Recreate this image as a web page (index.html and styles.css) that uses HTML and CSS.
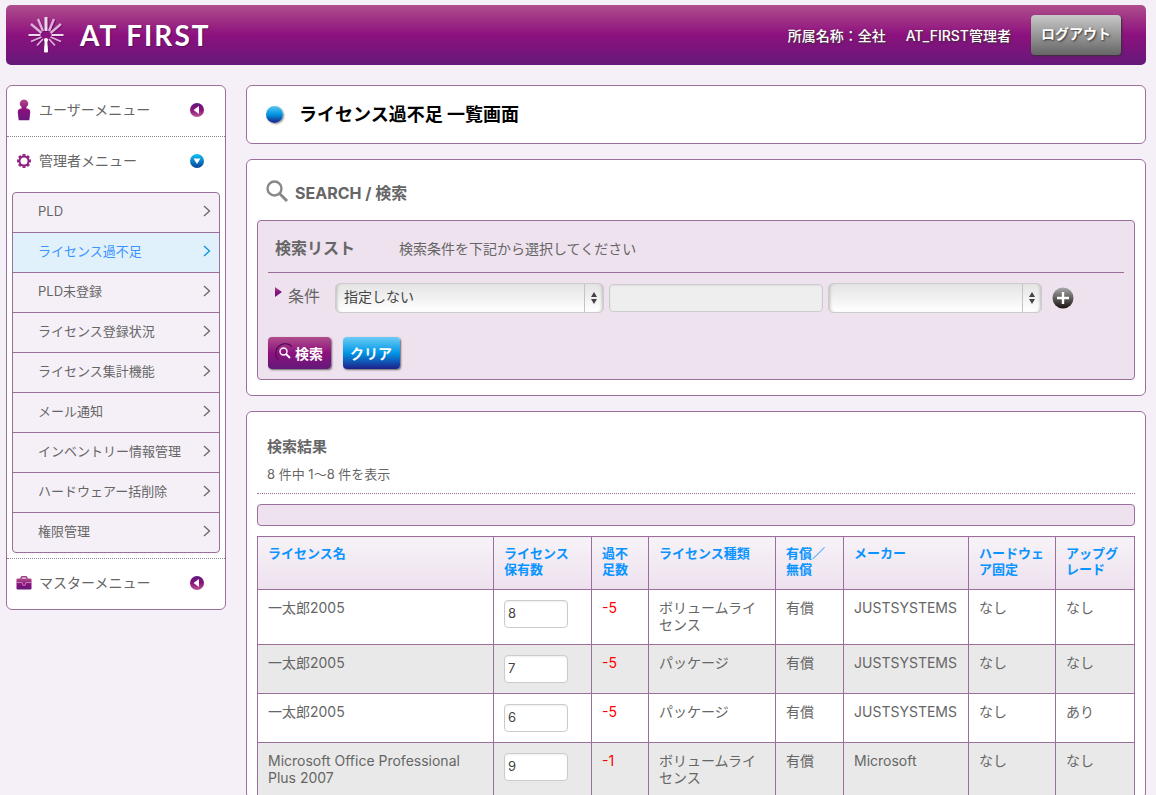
FILE: index.html
```
<!DOCTYPE html>
<html lang="ja">
  <head>
    <meta charset="utf-8">
    <title>ライセンス過不足 一覧画面 | AT FIRST</title>
    <link rel="stylesheet" href="styles.css">
  </head>
  <body>
    <!-- shared gradients and symbols -->
    <svg class="defs" width="0" height="0" aria-hidden="true">
      <defs>
        <linearGradient id="purple" x1="0" y1="0" x2="0" y2="1">
          <stop offset="0" stop-color="#b04e8c"/>
          <stop offset="0.5" stop-color="#8c117e"/>
          <stop offset="1" stop-color="#65197a"/>
        </linearGradient>
        <linearGradient id="purple-up" x1="0" y1="0" x2="0" y2="1">
          <stop offset="0" stop-color="#5c1a7c"/>
          <stop offset="0.5" stop-color="#8c117e"/>
          <stop offset="1" stop-color="#b55a92"/>
        </linearGradient>
        <linearGradient id="sky" x1="0" y1="0" x2="0" y2="1">
          <stop offset="0" stop-color="#10c4f6"/>
          <stop offset="1" stop-color="#063f96"/>
        </linearGradient>
        <linearGradient id="dark" x1="0" y1="0" x2="0" y2="1">
          <stop offset="0" stop-color="#a9aaa8"/>
          <stop offset="1" stop-color="#1a1210"/>
        </linearGradient>
        <symbol id="closed" viewBox="0 0 14 14">
          <circle cx="7" cy="7" r="7" fill="url(#purple-up)"/>
          <path d="M9 3v8L3.500 7z" fill="#fff"/>
        </symbol>
        <symbol id="chevron" viewBox="0 0 8 12">
          <path d="M1 1l5.500 5L1 11" fill="none" stroke="currentColor" stroke-width="1.300"/>
        </symbol>
        <symbol id="updown" viewBox="0 0 6 12">
          <path d="M3 0l3 5H0zM3 12L0 7h6z" fill="#444"/>
        </symbol>
      </defs>
    </svg>

    <header class="header">
      <a class="logo" href="#">
        <svg width="36" height="38" viewBox="0 0 36 38" stroke="#dfb0d6" stroke-width="2.400" aria-hidden="true">
          <path d="M18 1v14" stroke="#f0d8ec" stroke-width="3"/>
          <path d="M10 3l5 12M26 3l-5 12"/>
          <path d="M3 8l10.500 9M33 8l-10.500 9"/>
          <path d="M0.500 19h12M23.500 19h12" stroke="#f0d8ec" stroke-width="2"/>
          <path d="M3 25.500l10.500-4.500M33 25.500l-10.500-4.500" stroke-width="1.800"/>
          <path d="M9 29.500l6-6.500M27 29.500l-6-6.500" stroke-width="1.800"/>
          <path d="M16.500 36l.7-11h1.600l.7 11z" fill="#fff" stroke="#fff" stroke-width="1"/>
          <circle cx="18" cy="24" r="2" fill="#fff" stroke="none"/>
        </svg>
        <span class="logo-text">AT FIRST</span>
      </a>
      <div class="account">
        <span>所属名称：全社</span>
        <span>AT_FIRST管理者</span>
        <button type="button" class="logout">ログアウト</button>
      </div>
    </header>

    <div class="container">
      <nav class="sidebar">
        <a class="menu-head" href="#">
          <svg class="menu-icon" width="16" height="22" viewBox="0 0 16 22" fill="url(#purple)" aria-hidden="true">
            <path d="M8 0.500a4 4 0 0 1 2.600 7.200L10.300 9.500C13 9.700 14.300 10.500 14.300 13L13.300 21.200H2.700L1.700 13c0-2.500 1.300-3.300 4-3.500L5.400 7.700A4 4 0 0 1 8 0.500z"/>
          </svg>
          <span>ユーザーメニュー</span>
          <svg class="toggle" width="14" height="14" aria-hidden="true"><use href="#closed"/></svg>
        </a>
        <div class="menu-group">
          <a class="menu-head" href="#">
            <svg class="menu-icon" width="16" height="16" viewBox="0 0 16 16" aria-hidden="true">
              <g fill="#9a2a84">
                <path d="M6.500 1h3v14h-3zM1 6.500h14v3H1z"/>
                <path d="M6.500 1h3v14h-3zM1 6.500h14v3H1z" transform="rotate(45 8 8)"/>
              </g>
              <circle cx="8" cy="8" r="4.500" fill="#fff" stroke="#922082" stroke-width="2"/>
            </svg>
            <span>管理者メニュー</span>
            <svg class="toggle" width="14" height="14" viewBox="0 0 14 14" aria-hidden="true">
              <circle cx="7" cy="7" r="7" fill="url(#sky)"/>
              <path d="M3.500 4.500h7L7 10z" fill="#fff"/>
            </svg>
          </a>
          <ul class="submenu">
            <li><a href="#">PLD<svg width="8" height="12"><use href="#chevron"/></svg></a></li>
            <li class="active"><a href="#">ライセンス過不足<svg width="8" height="12"><use href="#chevron"/></svg></a></li>
            <li><a href="#">PLD未登録<svg width="8" height="12"><use href="#chevron"/></svg></a></li>
            <li><a href="#">ライセンス登録状況<svg width="8" height="12"><use href="#chevron"/></svg></a></li>
            <li><a href="#">ライセンス集計機能<svg width="8" height="12"><use href="#chevron"/></svg></a></li>
            <li><a href="#">メール通知<svg width="8" height="12"><use href="#chevron"/></svg></a></li>
            <li><a href="#">インベントリー情報管理<svg width="8" height="12"><use href="#chevron"/></svg></a></li>
            <li><a href="#">ハードウェアー括削除<svg width="8" height="12"><use href="#chevron"/></svg></a></li>
            <li><a href="#">権限管理<svg width="8" height="12"><use href="#chevron"/></svg></a></li>
          </ul>
        </div>
        <a class="menu-head" href="#">
          <svg class="menu-icon" width="16" height="14" viewBox="0 0 16 14" aria-hidden="true">
            <path d="M4.500 3l1.500-2.200h4L11.500 3" fill="none" stroke="#a23c88" stroke-width="1.400"/>
            <rect x="0.500" y="2.500" width="15" height="11" rx="1" fill="url(#purple)"/>
            <path d="M1 6.500h5M10 6.500h5M6.500 6.500v1.500a1.500 1.500 0 0 0 3 0V6.500" fill="none" stroke="#c98abd" stroke-width="0.900"/>
          </svg>
          <span>マスターメニュー</span>
          <svg class="toggle" width="14" height="14" aria-hidden="true"><use href="#closed"/></svg>
        </a>
      </nav>

      <main class="main">
        <section class="card title-card">
          <span class="ball"></span>
          <h1>ライセンス過不足 一覧画面</h1>
        </section>

        <section class="card search-card">
          <h2 class="search-title">
            <svg width="23" height="23" viewBox="0 0 23 23" fill="none" stroke="#888" aria-hidden="true">
              <circle cx="8.500" cy="8.500" r="7" stroke-width="2.400"/>
              <path d="M13.500 13.500l7.500 7.500" stroke-width="3"/>
            </svg>
            <span>SEARCH / 検索</span>
          </h2>
          <form class="search-panel">
            <div class="panel-head">
              <h3>検索リスト</h3>
              <p>検索条件を下記から選択してください</p>
            </div>
            <div class="condition">
              <svg class="marker" width="7" height="10" viewBox="0 0 7 10" aria-hidden="true">
                <path d="M0 0l7 5-7 5z" fill="url(#purple)"/>
              </svg>
              <label for="field">条件</label>
              <div class="select field-select">
                <select id="field">
                  <option>指定しない</option>
                </select>
                <svg width="6" height="12" aria-hidden="true"><use href="#updown"/></svg>
              </div>
              <input class="keyword" type="text" aria-label="キーワード">
              <div class="select operator-select">
                <select aria-label="一致条件">
                  <option></option>
                </select>
                <svg width="6" height="12" aria-hidden="true"><use href="#updown"/></svg>
              </div>
              <button type="button" class="add" aria-label="条件を追加">
                <svg width="22" height="22" viewBox="0 0 22 22">
                  <circle cx="11" cy="11" r="10.500" fill="url(#dark)"/>
                  <path d="M11 5v12M5 11h12" stroke="#fff" stroke-width="2.400"/>
                </svg>
              </button>
            </div>
            <div class="buttons">
              <button type="submit" class="btn btn-search">
                <svg width="20" height="20" viewBox="0 0 20 20" fill="none" aria-hidden="true">
                  <path d="M3.500 17A9.300 9.300 0 0 1 17 3.500" stroke="#560c56" stroke-width="1.200"/>
                  <circle cx="8.500" cy="8.500" r="3.500" stroke="#fff" stroke-width="1.400"/>
                  <path d="M11 11l4 4" stroke="#fff" stroke-width="1.800"/>
                </svg>
                検索
              </button>
              <button type="reset" class="btn btn-clear">クリア</button>
            </div>
          </form>
        </section>

        <section class="card result-card">
          <div class="result-head">
            <h2>検索結果</h2>
            <p>8 件中 1〜8 件を表示</p>
          </div>
          <div class="toolbar"></div>
          <table class="result">
            <colgroup>
              <col>
              <col class="col-count">
              <col class="col-diff">
              <col class="col-type">
              <col class="col-paid">
              <col class="col-maker">
              <col class="col-hard">
              <col class="col-upgrade">
            </colgroup>
            <thead>
              <tr>
                <th><a href="#">ライセンス名</a></th>
                <th><a href="#">ライセンス<br>保有数</a></th>
                <th><a href="#">過不<br>足数</a></th>
                <th><a href="#">ライセンス種類</a></th>
                <th><a href="#">有償／<br>無償</a></th>
                <th><a href="#">メーカー</a></th>
                <th><a href="#">ハードウェ<br>ア固定</a></th>
                <th><a href="#">アップグ<br>レード</a></th>
              </tr>
            </thead>
            <tbody>
              <tr>
                <td>一太郎2005</td>
                <td class="count"><input type="text" value="8" aria-label="ライセンス保有数"></td>
                <td class="minus">-5</td>
                <td>ボリュームライセンス</td>
                <td>有償</td>
                <td>JUSTSYSTEMS</td>
                <td>なし</td>
                <td>なし</td>
              </tr>
              <tr>
                <td>一太郎2005</td>
                <td class="count"><input type="text" value="7" aria-label="ライセンス保有数"></td>
                <td class="minus">-5</td>
                <td>パッケージ</td>
                <td>有償</td>
                <td>JUSTSYSTEMS</td>
                <td>なし</td>
                <td>なし</td>
              </tr>
              <tr>
                <td>一太郎2005</td>
                <td class="count"><input type="text" value="6" aria-label="ライセンス保有数"></td>
                <td class="minus">-5</td>
                <td>パッケージ</td>
                <td>有償</td>
                <td>JUSTSYSTEMS</td>
                <td>なし</td>
                <td>あり</td>
              </tr>
              <tr>
                <td>Microsoft Office Professional Plus 2007</td>
                <td class="count"><input type="text" value="9" aria-label="ライセンス保有数"></td>
                <td class="minus">-1</td>
                <td>ボリュームライセンス</td>
                <td>有償</td>
                <td>Microsoft</td>
                <td>なし</td>
                <td>なし</td>
              </tr>
            </tbody>
          </table>
        </section>
      </main>
    </div>
  </body>
</html>
```

FILE: styles.css
```
* {
  box-sizing: border-box;
}

body {
  margin: 0;
  padding: 5px 10px 20px 6px;
  background-color: #f5f0f7;
  color: #666;
  font-family: Inter, "Noto Sans CJK JP", sans-serif;
  font-size: 14px;
  line-height: 17px;
}

h1, h2, h3, p, ul {
  margin: 0;
  padding: 0;
}

a {
  color: inherit;
  text-decoration: none;
}

button, input, select {
  font-family: inherit;
  font-size: 14px;
  color: #444;
}

.defs {
  position: absolute;
}

/* header */
.header {
  display: flex;
  align-items: center;
  justify-content: space-between;
  height: 60px;
  padding: 0 25px 0 22px;
  border-radius: 5px;
  background: linear-gradient(#b04e8c, #8c117e 50%, #65197a);
  color: #fff;
}

.logo {
  display: flex;
  align-items: center;
  gap: 16px;
}

.logo-text {
  font-family: Lato, sans-serif;
  font-size: 28px;
  font-weight: bold;
  line-height: 32px;
  letter-spacing: 2px;
  text-shadow: 1px 1px 1px #5a0f5a;
}

.logo svg {
  filter: drop-shadow(1px 1px 0 #6d0f68);
}

.account {
  display: flex;
  align-items: center;
  gap: 20px;
  font-weight: 500;
  text-shadow: 1px 1px 2px #333;
}

.logout {
  width: 90px;
  height: 40px;
  padding: 0 0 4px;
  border: 0;
  border-radius: 4px;
  background: linear-gradient(#c8c8c8, #666);
  box-shadow: 1px 1px 2px #333;
  color: #fff;
  font-weight: bold;
  text-shadow: 1px 1px 2px #333;
}

.container {
  display: flex;
  align-items: flex-start;
  gap: 20px;
  margin-top: 20px;
}

/* side menu */
.sidebar {
  flex: 0 0 220px;
  border: 1px solid #9b6f9b;
  border-radius: 6px;
  background-color: #fff;
}

.menu-head {
  display: flex;
  align-items: center;
  height: 50px;
  padding: 0 21px 3px 9px;
}

.menu-icon {
  margin-right: 7px;
}

.toggle {
  margin-left: auto;
}

.menu-group {
  padding-bottom: 5px;
  border-top: 1px dotted #888;
  border-bottom: 1px dotted #888;
}

.submenu {
  margin: 5px 5px 0;
  border: 1px solid #9b6f9b;
  border-radius: 4px;
  background-color: #f5f0f7;
  list-style: none;
}

.submenu li + li {
  border-top: 1px solid #9b6f9b;
}

.submenu a {
  display: flex;
  align-items: center;
  justify-content: space-between;
  height: 39px;
  padding: 0 8px 3px 25px;
  font-size: 13px;
}

.submenu .active {
  background-color: #e0f1fc;
  color: #3a93ff;
}

.active svg {
  color: #0a94d6;
}

/* cards */
.main {
  flex: 1;
  min-width: 0;
}

.card {
  padding: 0 10px;
  border: 1px solid #9b6f9b;
  border-radius: 6px;
  background-color: #fff;
}

.card + .card {
  margin-top: 15px;
}

.title-card {
  display: flex;
  align-items: center;
  gap: 16px;
  height: 59px;
  padding: 0 19px;
}

.title-card h1 {
  color: #000;
  font-size: 18px;
  line-height: 24px;
}

.ball {
  width: 17px;
  height: 17px;
  border-radius: 50%;
  background: linear-gradient(#5cc4f2, #0095e0 50%, #1b1f86);
  box-shadow: 1px 1px 2px #888;
}

.search-card {
  padding-bottom: 15px;
}

.search-title {
  display: flex;
  align-items: center;
  gap: 6px;
  height: 60px;
  padding: 2px 0 0 9px;
  font-size: 16px;
  line-height: 20px;
}

.search-title span {
  padding-top: 4px;
}

.search-panel {
  padding: 0 10px 10px;
  border: 1px solid #9b6f9b;
  border-radius: 4px;
  background-color: #efe2ef;
}

.panel-head {
  display: flex;
  align-items: center;
  gap: 44px;
  height: 52px;
  padding: 4px 7px 0;
  border-bottom: 1px solid #9b6f9b;
}

.panel-head h3 {
  font-size: 16px;
}

.condition {
  display: flex;
  align-items: center;
  margin-top: 10px;
  padding-left: 7px;
}

.marker {
  align-self: flex-start;
  margin: 4px 6px 0 0;
}

.condition label {
  margin-right: 15px;
  padding-bottom: 4px;
  font-size: 16px;
}

.select {
  position: relative;
}

.select select {
  display: block;
  width: 100%;
  height: 30px;
  padding: 0 26px 4px 8px;
  border: 1px solid #ccc;
  border-radius: 5px;
  appearance: none;
  background: linear-gradient(#c4c4c4, #c4c4c4) right 18px top / 1px 100% no-repeat, linear-gradient(#e4e4e4, #fff);
  box-shadow: inset 3px 0 3px -2px #bbb, inset -3px 0 3px -2px #bbb;
}

.select svg {
  position: absolute;
  top: 9px;
  right: 7px;
  pointer-events: none;
}

.field-select {
  flex: 0 1 269px;
}

.operator-select {
  flex: 0 1 214px;
}

.keyword {
  flex: 0 1 214px;
  min-width: 0;
  height: 28px;
  margin: 0 5px;
  padding: 0 4px;
  border: 1px solid #ccc;
  border-radius: 4px;
  background-color: #eee;
  box-shadow: inset 0 1px 2px #ddd;
}

.add {
  display: flex;
  margin-left: 10px;
  padding: 0;
  border: 0;
  border-radius: 50%;
  background: none;
}

.buttons {
  display: flex;
  gap: 12px;
  margin-top: 24px;
}

.btn {
  display: flex;
  align-items: center;
  height: 32px;
  border: 0;
  border-radius: 4px;
  box-shadow: 1px 1px 2px #666;
  color: #fff;
  font-weight: bold;
}

.btn-search {
  padding: 0 8px 0 7px;
  background: linear-gradient(#b04e8c, #8c117e 50%, #65197a);
}

.btn-clear {
  padding: 0 8px 0 7px;
  background: linear-gradient(#6cccf5, #0097e6 50%, #1f1f8a);
}

/* result list */
.result-head {
  padding: 24px 10px 8px;
  border-bottom: 1px dotted #9b6f9b;
  line-height: 22px;
}

.result-head h2 {
  font-size: 15px;
}

.result-head p {
  margin-top: 5px;
  font-size: 13px;
}

.toolbar {
  height: 22px;
  margin: 10px 0;
  border: 1px solid #9b6f9b;
  border-radius: 4px;
  background-color: #efe2ef;
}

.result {
  width: 100%;
  table-layout: fixed;
  border-collapse: collapse;
}

.col-count {
  width: 98px;
}

.col-diff {
  width: 57px;
}

.col-type {
  width: 127px;
}

.col-paid {
  width: 68px;
}

.col-maker {
  width: 125px;
}

.col-hard {
  width: 87px;
}

.col-upgrade {
  width: 79px;
}

.result th,
.result td {
  padding: 9px 10px 11px;
  border: 1px solid #9b6f9b;
  text-align: left;
  vertical-align: top;
}

.result th {
  padding: 8px 10px 12px;
  background: linear-gradient(#f7f2f8, #ede1ee);
  color: #0a94ff;
  font-size: 13px;
  line-height: 16px;
}

.result tbody tr:nth-child(even) {
  background-color: #e9e9e9;
}

.result .count {
  padding: 10px;
}

.count input {
  display: block;
  width: 64px;
  height: 28px;
  padding: 0 3px 2px;
  border: 1px solid #ccc;
  border-radius: 4px;
  background-color: #fff;
  box-shadow: inset 0 1px 2px #eee;
  font-size: 13px;
}

.result .minus {
  color: #f00;
}
```
